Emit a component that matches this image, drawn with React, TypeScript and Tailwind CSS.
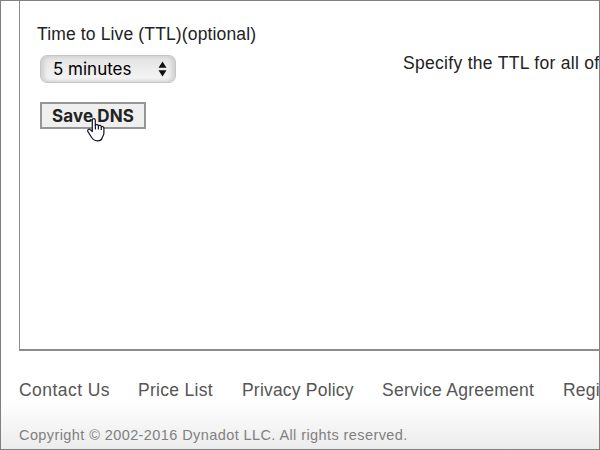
const links = [
  { label: "Contact Us", style: "w-[119px] tracking-[0.45px]" },
  { label: "Price List", style: "w-[104px] tracking-[0.3px]" },
  { label: "Privacy Policy", style: "w-[140px] tracking-[0.2px]" },
  { label: "Service Agreement", style: "w-[181px] tracking-[0.25px]" },
  { label: "Regi", style: "tracking-[0.2px]" },
];

function HandCursor() {
  return (
    <svg className="absolute left-[45px] top-[14px]" width="21" height="26" viewBox="0 0 21 26">
      <path
        d="M7.3 15.5V4.2C7.3 2.1 10.3 2.1 10.3 4.2V9.2C11.2 8.2 13.2 8.5 13.4 9.8C14.3 9 16.1 9.3 16.3 10.8C17.5 10.1 18.9 10.8 18.9 12.3V17C18.9 19.5 17.4 20.3 17.1 22C16.6 24.3 14.5 24.8 12.3 24.8C9 24.8 7.8 23.5 6.3 21L2.8 15.4C1.9 13.8 4.2 12.5 5.4 13.7Z"
        fill="#fff"
        stroke="#14142b"
        strokeWidth="1.2"
        strokeLinejoin="round"
      />
      <path d="M10.4 9V13.5M13.4 10V13.5M16.3 11V14" stroke="#14142b" strokeWidth="1.2" fill="none" />
    </svg>
  );
}

export default function App() {
  return (
    <div className="flex h-[450px] w-[600px] flex-col overflow-hidden border border-[#808080] bg-white font-['Liberation_Sans',Arial,sans-serif] text-[17.5px] text-[#222]">
      <main className="ml-[18px] flex h-[350px] shrink-0 border-b-2 border-l border-[#8c8c8c]">
        <section className="flex w-[383px] shrink-0 flex-col items-start pl-[17px] pt-[22px]">
          <label className="whitespace-nowrap leading-[22px] tracking-[0.14px]">Time to Live (TTL)(optional)</label>
          <button className="ml-[3px] mt-[10px] flex h-[28px] w-[136px] items-center justify-between rounded-[7px] border border-[#c6c6c6] bg-linear-to-b from-[#e3e3e3] to-[#f6f6f6] pl-[12px] pr-[8px] font-[Inter,sans-serif] text-[17px] text-black shadow-[inset_3px_0_4px_#cfcfcf,inset_-3px_0_4px_#cfcfcf]">
            <span className="pt-[2px]">5 minutes</span>
            <svg width="9" height="16" viewBox="0 0 9 16" fill="#111">
              <path d="M4.5 0.5L8.5 6.8H0.5ZM4.5 15.5L0.5 9.2H8.5Z" />
            </svg>
          </button>
          <div className="relative ml-[3px] mt-[19px]">
            <button className="flex h-[27px] w-[106px] items-center justify-center border-2 border-[#969696] bg-[#efefef] pt-[2px] font-[Inter,sans-serif] text-[17px] font-bold tracking-[0.1px]">
              Save DNS
            </button>
            <HandCursor />
          </div>
        </section>
        <p className="whitespace-nowrap pt-[51px] leading-[22px] tracking-[0.3px]">Specify the TTL for all of</p>
      </main>
      <footer className="flex grow flex-col bg-linear-to-b from-white from-50% to-[#ececec] pl-[18px] pt-[28px]">
        <nav className="flex whitespace-nowrap leading-[22px] text-[#555]">
          {links.map((link) => (
            <a key={link.label} className={`shrink-0 ${link.style}`}>
              {link.label}
            </a>
          ))}
        </nav>
        <p className="mt-[25px] whitespace-nowrap text-[14.5px] leading-[18px] tracking-[0.41px] text-[#808080]">
          Copyright © 2002-2016 Dynadot LLC. All rights reserved.
        </p>
      </footer>
    </div>
  );
}
